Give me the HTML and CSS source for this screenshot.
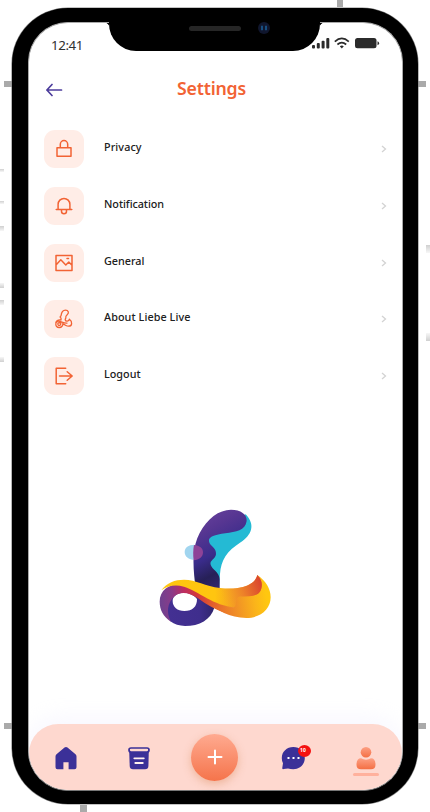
FILE: index.html
```html
<!DOCTYPE html>
<html lang="en">
<head>
<meta charset="utf-8">
<title>Settings</title>
<link rel="stylesheet" href="styles.css">
</head>
<body>
<div class="stage">
  <i class="tick t-top"></i><i class="tick t-bottom"></i>
  <i class="tick t-left high"></i><i class="tick t-right high"></i>
  <i class="tick t-left low"></i><i class="tick t-right low"></i>
  <i class="key k1"></i><i class="key k2"></i><i class="key k3"></i><i class="key k4 up"></i><i class="key k5"></i><i class="key k6 up"></i><i class="key k7"></i><i class="key k8 up"></i>
  <div class="phone">
    <div class="screen">
      <div class="status">
        <span class="time">12:41</span>
        <svg class="signals" width="70" height="12" viewBox="0 0 70 12">
          <g fill="#2b2b2b"><rect x="0" y="8" width="3" height="3.5" rx="1"/><rect x="4.8" y="6" width="3" height="5.5" rx="1"/><rect x="9.6" y="3.7" width="3" height="7.8" rx="1"/><rect x="14.3" y="1" width="3" height="10.5" rx="1"/><rect x="43" y="1" width="21.5" height="10.3" rx="2.5"/><path d="M65.5 4.2q1.6.4 1.6 2t-1.6 2z"/><path d="M27.8 9.2q2-1.5 4 0l-2 2.3z"/></g>
          <path d="M22.8 4.6q7-6.4 14 0M25.4 7.5q4.4-3.7 8.8 0" fill="none" stroke="#2b2b2b" stroke-width="1.7"/>
        </svg>
      </div>
      <header class="header">
        <svg width="17" height="14" viewBox="0 0 17 14" fill="none" stroke="#4c3d9c" stroke-width="1.7" stroke-linecap="round" stroke-linejoin="round"><path d="M15.500 7H.9M6 1.500.9 7 6 12.500"/></svg>
        <h1>Settings</h1>
      </header>
      <ul class="list">
        <li><span class="tile"><svg viewBox="0 0 20 20"><path d="M3 8.700h14v8.500H3zM6.300 8.700V5.300a3.700 3.700 0 0 1 7.400 0v3.400"/></svg></span><span class="label privacy">Privacy</span><svg class="chev" viewBox="0 0 6 8"><path d="m1 1 3.500 3L1 7"/></svg></li>
        <li><span class="tile"><svg viewBox="0 0 20 20"><path d="M2.200 13.600h15.600M4.100 13.400V8.300a5.900 5.900 0 0 1 11.800 0v5.100M7.500 14v1.300a2.500 2.500 0 0 0 5 0V14"/></svg></span><span class="label notification">Notification</span><svg class="chev" viewBox="0 0 6 8"><path d="m1 1 3.500 3L1 7"/></svg></li>
        <li><span class="tile"><svg viewBox="0 0 20 20"><path d="M2 2.500h16v15H2zM2 12l4.800-5.200 5 5.200 3-3 3.200 3.200M13 5.600h1.500"/></svg></span><span class="label general">General</span><svg class="chev" viewBox="0 0 6 8"><path d="m1 1 3.500 3L1 7"/></svg></li>
        <li><span class="tile"><svg class="mark" viewBox="0 0 20 20"><path d="M7 11V9q-1.300-.7-.6-1.700L7 7c.4-3.400 2-5.800 4.500-5.800 3 0 3.700 2.600 1.900 4.200-1.500 1.300-1.900 2.100-1.600 3.200.2.700-.7 1.200-.6 2.200q.3 1.600 2.200 1.300c1.600-.2 1.800-1 2-1.900 3.400 2.400 2.800 7-.7 7-2.200 0-2.800-.9-4.800-1.800M8.900 14.200c.2 2.300-1.300 4.300-3.700 4.300S1.800 17 1.800 15c0-2 1.800-3.200 3.800-2.700 2.300.5 4.500 2.100 7.400 1.800M7 11q-4-.5-5.200 2.500M6.800 14q-3.400-.8-2.900 1.200.5 1.700 2.200 1 .8-.6.7-2.200"/></svg></span><span class="label about">About Liebe Live</span><svg class="chev" viewBox="0 0 6 8"><path d="m1 1 3.500 3L1 7"/></svg></li>
        <li><span class="tile"><svg viewBox="0 0 20 20"><path d="M11.700 2.300H2.200v15.400h9.500M5.500 10h12.700M13.200 5.700l5 4.300-5 4.300"/></svg></span><span class="label logout">Logout</span><svg class="chev" viewBox="0 0 6 8"><path d="m1 1 3.500 3L1 7"/></svg></li>
      </ul>
      <svg class="logo" viewBox="27 27 339 354">
        <defs>
          <linearGradient id="stem" x1="0" y1="0" x2=".35" y2="1"><stop offset="0" stop-color="#6b449f"/><stop offset=".3" stop-color="#573692"/><stop offset=".6" stop-color="#3a2c8b"/><stop offset=".82" stop-color="#262057"/><stop offset="1" stop-color="#30266f"/></linearGradient>
          <linearGradient id="ring" x1="0" y1="0" x2="1" y2="0"><stop offset="0" stop-color="#443093"/><stop offset=".7" stop-color="#3f2e8d"/><stop offset="1" stop-color="#30256c"/></linearGradient>
          <linearGradient id="gold" gradientUnits="userSpaceOnUse" x1="35" y1="260" x2="325" y2="260"><stop offset="0" stop-color="#ffc70f"/><stop offset=".55" stop-color="#ffc510"/><stop offset=".78" stop-color="#f39b25"/><stop offset="1" stop-color="#ee8628"/></linearGradient>
          <linearGradient id="belly" gradientUnits="userSpaceOnUse" x1="165" y1="290" x2="345" y2="260"><stop offset="0" stop-color="#e2592c"/><stop offset=".45" stop-color="#f08d27"/><stop offset=".8" stop-color="#fbb51a"/><stop offset="1" stop-color="#ffc70f"/></linearGradient>
          <linearGradient id="red" gradientUnits="userSpaceOnUse" x1="35" y1="330" x2="245" y2="310"><stop offset="0" stop-color="#71418f"/><stop offset=".17" stop-color="#8b3a88"/><stop offset=".34" stop-color="#bd2d60"/><stop offset=".52" stop-color="#d4373c"/><stop offset=".75" stop-color="#e4612c"/><stop offset="1" stop-color="#ef8b28"/></linearGradient>
          <linearGradient id="tip" gradientUnits="userSpaceOnUse" x1="215" y1="285" x2="335" y2="245"><stop offset="0" stop-color="#f5a423" stop-opacity="0"/><stop offset=".5" stop-color="#ed8129"/><stop offset="1" stop-color="#d9422f"/></linearGradient>
        </defs>
        <path fill="#24bad4" d="M287 43c31 32 17 63-15 84-42 27-59 54-62 95l-3 43-40-60-5-90z"/>
        <path fill="url(#stem)" d="M135 250c-7-64-8-109 14-151 22-43 58-70 94-70 29 0 49 14 47 34-4 29-32 32-64 37-31 5-51 9-49 24 2 16 23 18 21 39-1 14-20 18-16 31 3 13 27 23 27 43v38z"/>
        <path fill="#a1d5ef" d="M133 134c-18 0-29 9-29 22s11 24 30 24z"/>
        <path fill="#8e4397" d="M132 135c17 1 27 10 27 22 0 14-12 23-28 24-2-15-2-31 1-46z"/>
        <path fill="url(#ring)" fill-rule="evenodd" d="M50 278c35-24 98-14 143 45-11 36-44 55-88 55-17 0-32-5-44-14-12-22-28-66-11-86zM68 303c0 18 14 30 35 30 25 0 38-13 38-36-12-14-30-21-47-18-17 3-26 12-26 24z"/>
        <path fill="url(#red)" d="M63 365C39 350 29 328 29 305c0-34 27-54 65-54 50 0 97 58 161 69l-35 17c-25-8-48-22-76-42-25-18-54-23-72-5-20 19-24 47-9 75z"/>
        <path fill="url(#gold)" d="M34 271c16-23 41-32 68-32 36 0 64 20 108 25 39 4 74 1 94-14 11-7 15-15 18-25l20 24-12 48-73 25c-69-5-109-48-155-62-27-8-50-2-68 11z"/>
        <path fill="url(#belly)" d="M322 225c25 17 40 41 40 67 0 36-31 62-73 62-50 0-88-24-120-47 29 16 58 22 86 13l7-28c36-4 64-4 71-23 8-21-3-31-11-44z"/>
        <path fill="url(#tip)" d="M209 264c38 4 75 2 95-14 11-7 15-15 18-25 11 11 15 22 13 35-3 23-20 29-45 29-20 0-27-1-29 8-2 12 2 20-13 25-17 1-45-8-61-15z"/>
      </svg>
      <nav class="nav">
        <span class="cell"><svg width="22" height="23" viewBox="0 0 22 23"><path fill="#3b3098" d="M11 0q.8 0 1.500.6l8 6.700q1 .9 1 2.100v10.800q0 2-2 2h-5.900v-7H8.400v7H2.500q-2 0-2-2V9.400q0-1.200 1-2.100l8-6.700Q10.200 0 11 0z"/></svg></span>
        <span class="cell"><svg width="22" height="23" viewBox="0 0 22 23"><path fill="#3b3098" d="M1.200 4h19.600l-.4 15q-.1 3.200-3.400 3.200H5Q1.900 22.200 1.700 19z"/><rect x="1" y="1" width="20" height="4" rx="2" fill="#fed8cf" stroke="#3b3098" stroke-width="1.700"/><path d="M6.300 11.300h9.500M7.300 16h7.500" stroke="#fff0ed" stroke-width="1.800" stroke-linecap="round"/></svg></span>
        <span class="cell center"><span class="add"><svg width="16" height="16" viewBox="0 0 16 16"><path d="M8 1.500v13M1.500 8h13" stroke="#fff" stroke-width="2" stroke-linecap="round"/></svg></span></span>
        <span class="cell chat"><svg width="24" height="23" viewBox="0 0 24 23"><path fill="#3b3098" d="M12.300 0c6.500 0 11.500 4.700 11.500 11s-5 11.200-11.500 11.200c-2 0-3.700-.3-5.300-.8l-4.300.7q-1.700.3-1.400-1.400l.7-4.500A11 11 0 0 1 .8 11C.8 4.700 5.800 0 12.300 0z"/><path fill="#fff" d="M6.500 10h2v2h-2zM11.500 10h2v2h-2zM16.500 10h2v2h-2z"/></svg><b class="badge">10</b></span>
        <span class="cell profile"><svg width="20" height="23" viewBox="0 0 20 23"><defs><linearGradient id="peach" x1="0" y1="0" x2="0" y2="1"><stop stop-color="#fda084"/><stop offset="1" stop-color="#f46f43"/></linearGradient></defs><circle cx="10" cy="5.300" r="5.300" fill="url(#peach)"/><path fill="url(#peach)" d="M5 11.300q5 2.800 10 0c3 0 4.500 2.300 4.500 6.500 0 3-1.600 4.500-4.500 4.500H5c-2.900 0-4.500-1.500-4.500-4.500 0-4.200 1.500-6.500 4.500-6.500z"/></svg></span>
      </nav>
    </div>
    <div class="notch"><i class="speaker"></i><i class="camera"></i></div>
  </div>
</div>
</body>
</html>
```
FILE: styles.css
```css
* { box-sizing: border-box; }
body { margin: 0; background: #fff; font-family: "Noto Sans", "Open Sans", sans-serif; }
.stage { position: relative; width: 430px; height: 812px; padding: 7.5px 12px; overflow: hidden; }
.phone { position: relative; width: 406px; height: 796.5px; padding: 14.5px 16px 13.5px; border-radius: 56px; background: #000; box-shadow: 0 0 0 .6px #888; }
.screen { display: flex; flex-direction: column; width: 375px; height: 769px; overflow: hidden; border-radius: 40px; background: #fff; border: 1px solid #aaa; border-bottom-color: #777; }
.status { display: flex; flex: 0 0 37px; padding: 14px 19px 0 22px; justify-content: space-between; align-items: flex-start; }
.time { margin-top: -1px; font-size: 13.3px; line-height: 18px; color: #303030; letter-spacing: -.4px; }
.signals { margin-right: 1px; }
.header { display: grid; grid-template-columns: 34px 1fr 43px; height: 70px; padding: 14px 16px 0 17px; }
.header svg { margin-top: 9px; }
.header h1 { margin: 2px 0 0; text-align: center; font: 600 17.7px/24px "Noto Sans", sans-serif; letter-spacing: -.2px; color: #f26334; }
.list { display: flex; flex-direction: column; gap: 18.8px; margin: 0; padding: 0 15px; list-style: none; }
.list li { display: flex; align-items: center; height: 38px; }
.tile { display: flex; align-items: center; justify-content: center; flex: 0 0 40px; height: 38px; border-radius: 11px; background: #ffede7; }
.tile svg { width: 20px; height: 20px; fill: none; stroke: #f26334; stroke-width: 1.5; stroke-linejoin: round; stroke-linecap: round; }
.tile .mark { stroke-width: 1.3; }
.label { flex: 1; margin-left: 20px; padding-bottom: 4px; font-size: 10.8px; line-height: 16px; font-weight: 500; color: #202020; }
.privacy { letter-spacing: .1px; }
.notification { letter-spacing: -.05px; }
.about { letter-spacing: .08px; }
.chev { width: 6px; height: 8px; fill: none; stroke: #d3d3d3; stroke-width: 1.3; }
.logo { width: 113px; height: 118px; margin: 113.5px auto 0 130px; flex: none; }
.nav { display: grid; grid-template-columns: 73.7px 73.3px 78px 79px 68px; align-items: center; flex: 0 0 66px; margin-top: auto; border-radius: 32px 32px 40px 40px; background: #fed8cf; box-shadow: 0 -6px 22px #eeeaff66; }
.cell { display: flex; align-items: center; justify-content: center; position: relative; top: 1px; }
.center { top: 0; }
.add { display: flex; align-items: center; justify-content: center; width: 47px; height: 47px; border-radius: 50%; background: linear-gradient(#ffaa90, #f5744b); box-shadow: 0 3px 8px #d9885870; }
.badge { position: absolute; left: 44px; top: -2px; width: 13px; height: 12px; border-radius: 50%; background: #f41111; color: #fff; font-size: 5px; line-height: 10px; text-align: center; padding-right: 3px; }
.profile { left: -1px; }
.profile::after { content: ""; position: absolute; top: 26px; width: 26px; height: 3px; border-radius: 2px; background: #ffb19d; }
.notch { position: absolute; left: 97px; top: 14px; width: 211px; height: 29.5px; border-radius: 0 0 27px 27px; background: #000; }
.notch::before, .notch::after { content: ""; position: absolute; top: 1px; width: 3px; height: 3px; }
.notch::before { left: -3px; background: radial-gradient(circle at 0 100%, transparent 2.5px, #000 3px); }
.notch::after { right: -3px; background: radial-gradient(circle at 100% 100%, transparent 2.5px, #000 3px); }
.speaker { position: absolute; left: 80px; top: 4.5px; width: 52px; height: 5px; border-radius: 3px; background: #262626; }
.camera { position: absolute; left: 149px; top: 0; width: 12px; height: 12px; border-radius: 50%; background: radial-gradient(ellipse 1.2px 3px at 4px 6px, #174e80 70%, transparent), radial-gradient(ellipse 1.2px 3px at 8px 6px, #174e80 70%, transparent), #10162d; }
.tick { position: absolute; width: 8px; height: 6px; background: #aaa; }
.t-left { left: 4px; } .t-right { right: 4px; } .high { top: 81px; } .low { top: 723px; }
.t-top { left: 337px; top: 0; width: 6px; height: 7px; } .t-bottom { left: 80px; top: 805px; width: 7px; height: 7px; }
.key { position: absolute; left: 0; width: 4px; height: 5px; background: linear-gradient(#d0d0d0, #f7f7f7); }
.up { background: linear-gradient(#f7f7f7, #d0d0d0); }
.k1 { top: 169px; height: 3px; } .k2 { top: 201px; height: 3px; } .k3 { top: 226px; } .k4 { top: 283px; } .k5 { top: 300px; } .k6 { top: 357px; }
.k7 { left: 426px; top: 245px; height: 8px; } .k8 { left: 426px; top: 333px; height: 8px; }
```
